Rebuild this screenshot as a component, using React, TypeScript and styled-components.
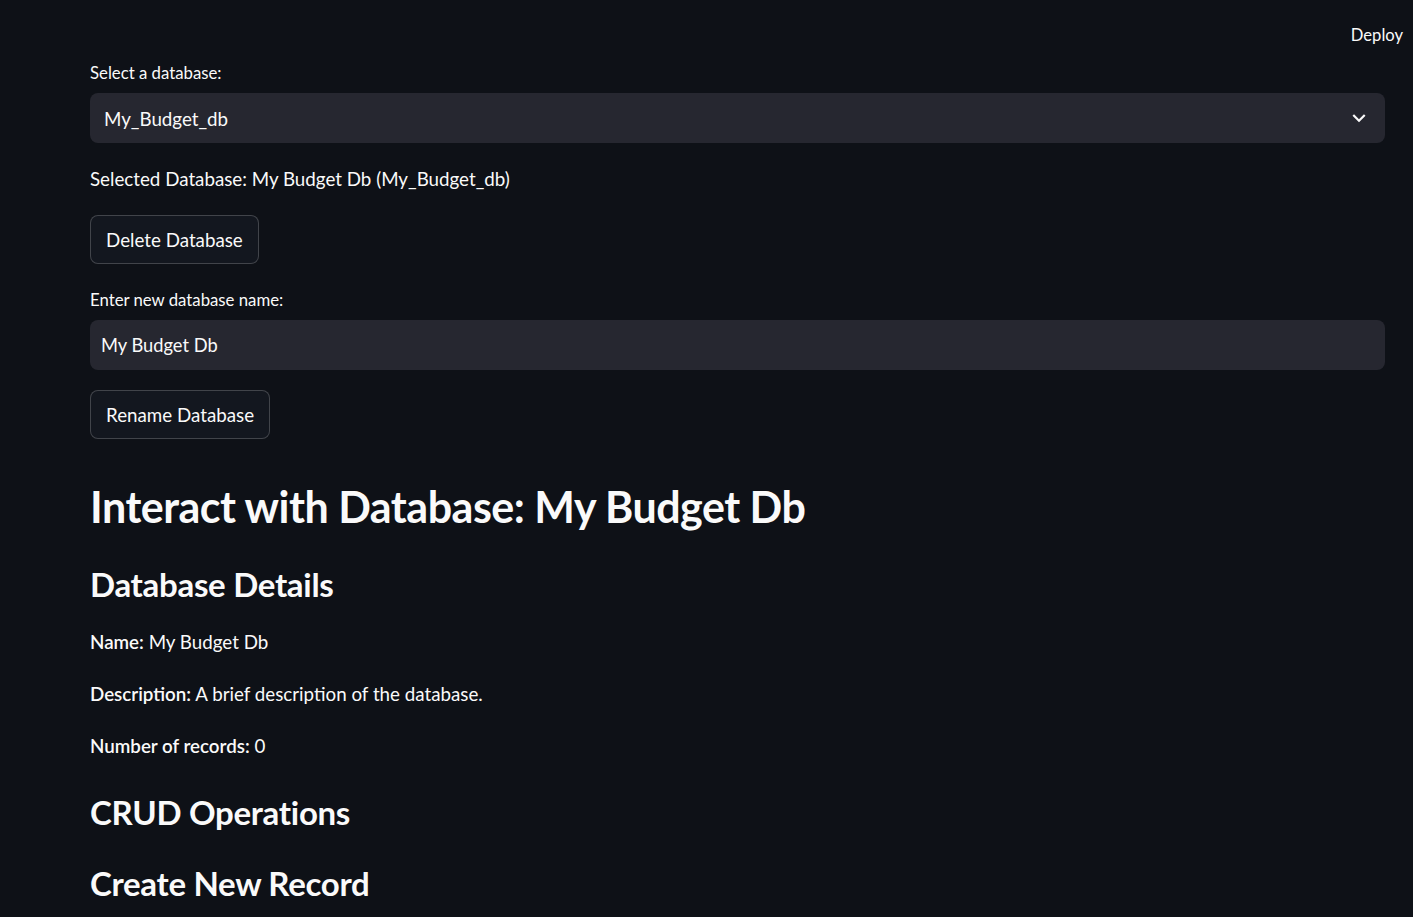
import React from "react";
import styled, { createGlobalStyle } from "styled-components";

const Global = createGlobalStyle`
  html, body { margin: 0; padding: 0; background: #0e1117; }
  body { font-family: "Lato", "Liberation Sans", sans-serif; color: #fafafa; }
  * { box-sizing: border-box; }
`;

const Page = styled.div`
  min-height: 917px;
  background: #0e1117;
  display: flex;
  flex-direction: column;
`;

const Header = styled.header`
  height: 60px;
  display: flex;
  align-items: center;
  justify-content: flex-end;
  padding: 9px 10px 0 0;
`;

const DeployButton = styled.button`
  background: transparent;
  border: none;
  color: #fafafa;
  font-family: inherit;
  font-size: 16.6px;
  padding: 0;
  cursor: pointer;
`;

const Main = styled.main`
  display: flex;
  flex-direction: column;
  align-items: stretch;
  padding: 3px 28px 0 90px;
`;

const Label = styled.label<{ $mt?: number }>`
  display: block;
  font-size: 16.75px;
  line-height: 20px;
  margin-top: ${(p) => p.$mt ?? 0}px;
  margin-bottom: 10px;
`;

const SelectBox = styled.div`
  height: 50px;
  background: #262730;
  border-radius: 8px;
  display: flex;
  align-items: center;
  justify-content: space-between;
  padding: 0 13px 0 14px;
  font-size: 18.75px;
`;

const TextInput = styled.input`
  height: 50px;
  width: 100%;
  background: #262730;
  border: none;
  border-radius: 8px;
  padding: 0 11px;
  font-family: inherit;
  font-size: 18.3px;
  color: #fafafa;
  outline: none;
`;

const Paragraph = styled.p<{ $mt: number }>`
  margin: ${(p) => p.$mt}px 0 0;
  font-size: 18.75px;
  line-height: 26px;

  strong {
    font-weight: 600;
  }
`;

const Button = styled.button<{ $mt: number }>`
  align-self: flex-start;
  margin-top: ${(p) => p.$mt}px;
  height: 49px;
  padding: 0 15px;
  background: #13171f;
  border: 1px solid rgba(250, 250, 250, 0.2);
  border-radius: 8px;
  color: #fafafa;
  font-family: inherit;
  font-size: 18.75px;
  cursor: pointer;
`;

const Title = styled.h1`
  margin: 41px 0 0;
  font-size: 43px;
  line-height: 54px;
  font-weight: 700;
  letter-spacing: -0.5px;
`;

const SubTitle = styled.h2<{ $mt: number }>`
  margin: ${(p) => p.$mt}px 0 0;
  font-size: 33px;
  line-height: 44px;
  font-weight: 700;
  letter-spacing: -0.3px;
`;

const Chevron = () => (
  <svg width="26" height="26" viewBox="0 0 24 24" fill="#fafafa" aria-hidden>
    <path d="M7.41 8.59L12 13.17l4.59-4.58L18 10l-6 6-6-6 1.41-1.41z" />
  </svg>
);

export default function App() {
  return (
    <Page>
      <Global />
      <Header>
        <DeployButton>Deploy</DeployButton>
      </Header>
      <Main>
        <Label>Select a database:</Label>
        <SelectBox>
          <span>My_Budget_db</span>
          <Chevron />
        </SelectBox>
        <Paragraph $mt={23}>Selected Database: My Budget Db (My_Budget_db)</Paragraph>
        <Button $mt={23}>Delete Database</Button>
        <Label $mt={26}>Enter new database name:</Label>
        <TextInput defaultValue="My Budget Db" />
        <Button $mt={20}>Rename Database</Button>
        <Title>Interact with Database: My Budget Db</Title>
        <SubTitle $mt={28}>Database Details</SubTitle>
        <Paragraph $mt={23}>
          <strong>Name:</strong> My Budget Db
        </Paragraph>
        <Paragraph $mt={26}>
          <strong>Description:</strong> A brief description of the database.
        </Paragraph>
        <Paragraph $mt={26}>
          <strong>Number of records:</strong> 0
        </Paragraph>
        <SubTitle $mt={31}>CRUD Operations</SubTitle>
        <SubTitle $mt={27}>Create New Record</SubTitle>
      </Main>
    </Page>
  );
}
